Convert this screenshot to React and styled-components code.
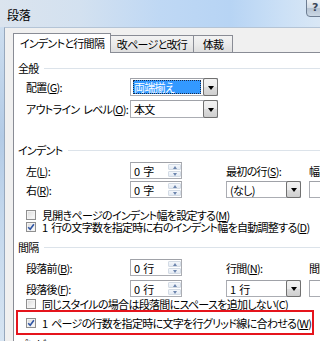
import React from 'react'
import styled, { createGlobalStyle } from 'styled-components'

const font = `"Noto Sans CJK JP", "Noto Sans", sans-serif`

const GlobalStyle = createGlobalStyle`
  html, body {
    margin: 0;
    padding: 0;
  }
  body {
    width: 320px;
    height: 341px;
    overflow: hidden;
    font-family: ${font};
    font-size: 11px;
    font-feature-settings: "palt";
    letter-spacing: -0.7px;
    word-spacing: 2px;
    color: #000;
  }
`

const Window = styled.div`
  width: 320px;
  height: 341px;
  display: flex;
  flex-direction: column;
  overflow: hidden;
  background: linear-gradient(180deg, #d3e2f1 0%, #b3cbe6 40%, #c4d8ed 65%, #d6e4f2 100%);
`

const TitleBar = styled.div`
  height: 27px;
  flex: none;
  display: flex;
  align-items: flex-start;
  justify-content: space-between;
  background: linear-gradient(90deg, #dbe4ee 0%, #d3e1f0 25%, #bfd8f4 50%, #b7d4f4 72%, #cbe0f6 88%, #d9e7f5 100%);
`

const Title = styled.span`
  font-size: 12px;
  letter-spacing: -0.3px;
  line-height: 14px;
  margin: 8px 0 0 7px;
`

const HelpButton = styled.div`
  width: 28px;
  height: 18px;
  box-sizing: border-box;
  margin-top: -1px;
  margin-right: -14px;
  padding-left: 5px;
  border: 1px solid #6d7d92;
  border-radius: 0 0 4px 4px;
  background: linear-gradient(180deg, #edf1f5 0%, #d3dce6 48%, #b6c3d2 52%, #cbd8e5 100%);
  color: #3c4758;
  font-family: "DejaVu Sans", sans-serif;
  font-size: 11px;
  font-weight: bold;
  line-height: 16px;
`

const Client = styled.div`
  flex: 1;
  min-width: 0;
  margin-left: 4px;
  border-left: 1px solid #97a8bd;
  border-top: 1px solid #b4c4d6;
  background: #f0f0f0;
  padding: 5px 0 0 8px;
  display: flex;
  flex-direction: column;
`

const TabStrip = styled.div`
  height: 20px;
  flex: none;
  display: flex;
  align-items: flex-end;
  position: relative;
  z-index: 1;
`

const Tab = styled.div`
  width: ${p => p.$w}px;
  height: ${p => (p.$active ? 20 : 17)}px;
  margin-bottom: ${p => (p.$active ? 0 : 1)}px;
  margin-left: -1px;
  box-sizing: border-box;
  border: 1px solid #898c95;
  border-bottom: none;
  background: ${p => (p.$active ? '#fff' : 'linear-gradient(180deg, #f3f3f3 0%, #ebebeb 50%, #dedede 100%)')};
  text-align: center;
  line-height: ${p => (p.$active ? 19 : 16)}px;
  white-space: nowrap;

  &:first-child {
    margin-left: 0;
  }
`

const Panel = styled.div`
  width: 420px;
  flex: 1;
  margin-top: -1px;
  border: 1px solid #898c95;
  border-bottom: none;
  background: #fff;
  padding: 7px 0 0 4px;
  display: flex;
  flex-direction: column;
`

const Section = styled.div`
  height: 16px;
  flex: none;
  margin-top: ${p => p.$gap || 0}px;
  display: flex;
  align-items: center;
  white-space: nowrap;

  &::after {
    content: '';
    flex: 1;
    margin-left: 5px;
    border-top: 1px solid #dce3ea;
  }
`

const Row = styled.div`
  height: ${p => p.$h || 17}px;
  flex: none;
  margin-top: ${p => p.$gap || 0}px;
  padding-left: 8px;
  display: flex;
  align-items: center;
  white-space: nowrap;
`

const Label = styled.span`
  width: ${p => (p.$w ? `${p.$w}px` : 'auto')};
  margin-left: ${p => p.$ml || 0}px;
  flex: none;
  white-space: nowrap;
`

const Field = styled.div`
  width: ${p => p.$w}px;
  height: ${p => p.$h || 17}px;
  margin-left: ${p => p.$ml || 0}px;
  flex: none;
  box-sizing: border-box;
  border: 1px solid #abadb3;
  border-top-color: #a0a2a8;
  background: #fff;
  display: flex;
  align-items: center;
  padding-left: 2px;
`

const FieldText = styled.span`
  flex: 1;
  padding-left: 1px;
  white-space: pre;
`

const Selected = styled.span`
  flex: 1;
  align-self: stretch;
  margin: 1px 1px 1px 0;
  padding-left: 1px;
  background: #3399ff;
  color: #fff;
  outline: 1px dotted #1a2b4a;
  outline-offset: -1px;
  line-height: 14px;
`

const DropButton = styled.span`
  width: 15px;
  align-self: stretch;
  margin: -1px -1px -1px 1px;
  box-sizing: border-box;
  border: 1px solid #707070;
  border-radius: 2px;
  background: linear-gradient(180deg, #f2f2f2 0%, #ebebeb 50%, #dddddd 51%, #cfcfcf 100%);
  display: flex;
  align-items: center;
  justify-content: center;

  &::after {
    content: '';
    border-left: 3.5px solid transparent;
    border-right: 3.5px solid transparent;
    border-top: 4px solid #000;
    margin-top: 1px;
  }
`

const Spinner = styled.span`
  width: 13px;
  align-self: stretch;
  margin: 1px 0;
  display: flex;
  flex-direction: column;
  gap: 1px;
`

const SpinHalf = styled.span`
  flex: 1;
  box-sizing: border-box;
  border: 1px solid #d3dbe5;
  border-radius: 1px;
  background: linear-gradient(180deg, #f4f7fb, #e3eaf3);
  display: flex;
  align-items: center;
  justify-content: center;

  &::after {
    content: '';
    border-left: 2.5px solid transparent;
    border-right: 2.5px solid transparent;
    ${p => (p.$down ? 'border-top: 3px solid #6c85ad;' : 'border-bottom: 3px solid #6c85ad;')}
  }
`

const CheckRow = styled.div`
  height: ${p => p.$h || 12}px;
  flex: none;
  margin-top: ${p => p.$gap || 0}px;
  padding-left: 8px;
  display: flex;
  align-items: center;
  gap: 6px;
  white-space: nowrap;
  line-height: 12px;
`

const Box = styled.span`
  width: 10px;
  height: 10px;
  flex: none;
  box-sizing: border-box;
  border: 1px solid #8f8f8f;
  background: linear-gradient(135deg, #d9d9d9 0%, #eeeeee 55%, #ffffff 100%);
  box-shadow: inset 0 0 0 1px #f3f3f3;
  display: flex;
  align-items: center;
  justify-content: center;
`

const Highlight = styled.div`
  width: 298px;
  height: 25px;
  flex: none;
  margin-left: -2px;
  box-sizing: border-box;
  border: 2px solid #e5141c;
  display: flex;
  align-items: center;
`

function Check({ checked, children, gap, h }) {
  return (
    <CheckRow $gap={gap} $h={h}>
      <Box>
        {checked && (
          <svg width="8" height="8" viewBox="0 0 8 8">
            <path d="M1.2 4.2 L3.2 6.3 L6.9 1.3" fill="none" stroke="#2f55a4" strokeWidth="1.6" />
          </svg>
        )}
      </Box>
      <span>{children}</span>
    </CheckRow>
  )
}

function Spin({ value }) {
  return (
    <Field $w={52}>
      <FieldText>{value}</FieldText>
      <Spinner>
        <SpinHalf />
        <SpinHalf $down />
      </Spinner>
    </Field>
  )
}

function Combo({ value, w, h, ml, selected }) {
  return (
    <Field $w={w} $h={h} $ml={ml}>
      {selected ? <Selected>{value}</Selected> : <FieldText>{value}</FieldText>}
      <DropButton />
    </Field>
  )
}

export default function App() {
  return (
    <>
      <GlobalStyle />
      <Window>
        <TitleBar>
          <Title>段落</Title>
          <HelpButton>?</HelpButton>
        </TitleBar>
        <Client>
          <TabStrip>
            <Tab $active $w={98}>インデントと行間隔</Tab>
            <Tab $w={84}>改ページと改行</Tab>
            <Tab $w={40}>体裁</Tab>
          </TabStrip>
          <Panel>
            <Section>全般</Section>
            <Row $h={18} $gap={2}>
              <Label $w={104}>配置(<u>G</u>):</Label>
              <Combo value="両端揃え" w={88} h={18} selected />
            </Row>
            <Row $h={18} $gap={4}>
              <Label $w={104}>アウトライン レベル(<u>O</u>):</Label>
              <Combo value="本文" w={88} h={18} />
            </Row>

            <Section $gap={24}>インデント</Section>
            <Row $gap={4}>
              <Label $w={104}>左(<u>L</u>):</Label>
              <Spin value="0 字" />
              <Label $w={83} $ml={44}>最初の行(<u>S</u>):</Label>
              <Label>幅(<u>Y</u>):</Label>
            </Row>
            <Row $gap={2}>
              <Label $w={104}>右(<u>R</u>):</Label>
              <Spin value="0 字" />
              <Combo value="(なし)" w={75} ml={44} />
              <Field $w={50} $ml={8} />
            </Row>
            <Check gap={11}>見開きページのインデント幅を設定する(<u>M</u>)</Check>
            <Check checked>1 行の文字数を指定時に右のインデント幅を自動調整する(<u>D</u>)</Check>

            <Section $gap={6}>間隔</Section>
            <Row $gap={4}>
              <Label $w={104}>段落前(<u>B</u>):</Label>
              <Spin value="0 行" />
              <Label $w={83} $ml={44}>行間(<u>N</u>):</Label>
              <Label>間隔(<u>A</u>):</Label>
            </Row>
            <Row $gap={4}>
              <Label $w={104}>段落後(<u>F</u>):</Label>
              <Spin value="0 行" />
              <Combo value="1 行" w={75} ml={44} />
              <Field $w={50} $ml={8} />
            </Row>
            <Check gap={1}>同じスタイルの場合は段落間にスペースを追加しない(<u>C</u>)</Check>
            <Highlight>
              <Check checked>1 ページの行数を指定時に文字を行グリッド線に合わせる(<u>W</u>)</Check>
            </Highlight>
            <Section $gap={1}>プレビュー</Section>
          </Panel>
        </Client>
      </Window>
    </>
  )
}
